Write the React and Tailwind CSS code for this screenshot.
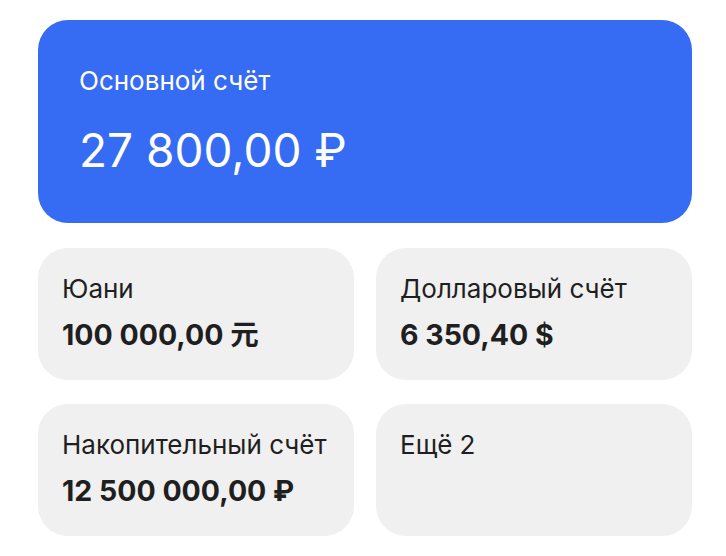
const accounts = [
  { name: 'Юани', amount: '100 000,00 元' },
  { name: 'Долларовый счёт', amount: '6 350,40 $' },
  { name: 'Накопительный счёт', amount: '12 500 000,00 ₽' },
  { name: 'Ещё 2', amount: null },
];

function AccountCard({ name, amount }) {
  return (
    <div className="h-[132px] rounded-[30px] bg-[#f0f0f0] pl-6 pt-[27px] text-[#1f1f1f]">
      <div className="text-[26px] leading-7">{name}</div>
      {amount && (
        <div className="mt-[15px] text-[28.5px] font-bold leading-[34px]">{amount}</div>
      )}
    </div>
  );
}

export default function App() {
  return (
    <div
      className="min-h-screen bg-white pl-[38px] pr-[34px] pt-5"
      style={{ fontFamily: 'Inter, "Noto Sans CJK SC", sans-serif' }}
    >
      {/* основной счёт */}
      <div className="h-[203px] rounded-[30px] bg-[#366cf3] pl-[41px] pt-[47px] text-white">
        <div className="text-[26px] leading-7">Основной счёт</div>
        <div className="mt-[27px] text-[46px] leading-[56px]">27 800,00 ₽</div>
      </div>

      <div className="mt-[25px] grid grid-cols-2 gap-x-[22px] gap-y-6">
        {accounts.map((acc) => (
          <AccountCard key={acc.name} {...acc} />
        ))}
      </div>
    </div>
  );
}
